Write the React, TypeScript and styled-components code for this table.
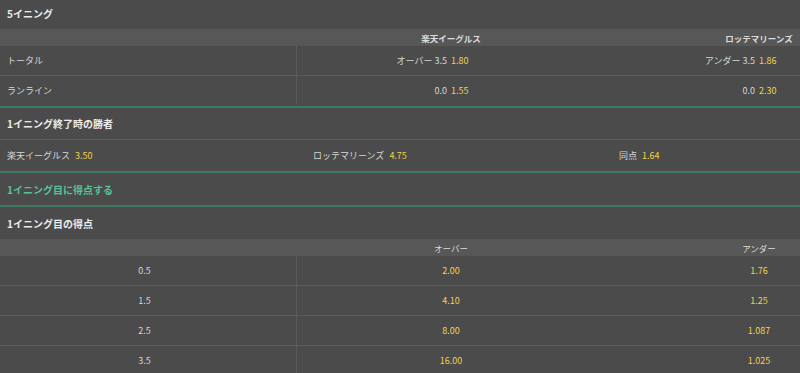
import styled, { createGlobalStyle } from 'styled-components';

const GlobalStyle = createGlobalStyle`
  html, body {
    margin: 0;
    padding: 0;
    background: #4b4b4b;
    overflow: hidden;
  }
  body {
    font-family: "Noto Sans CJK JP", "Noto Sans", sans-serif;
    -webkit-font-smoothing: antialiased;
  }
`;

interface ISide {
  label: string;
  odds: string;
}
interface ILineRow {
  name: string;
  home: ISide;
  away: ISide;
}
interface IScoreRow {
  line: string;
  over: string;
  under: string;
}

const HOME = '楽天イーグルス';
const AWAY = 'ロッテマリーンズ';

const LINE_ROWS: ILineRow[] = [
  { name: 'トータル', home: { label: 'オーバー 3.5', odds: '1.80' }, away: { label: 'アンダー 3.5', odds: '1.86' } },
  { name: 'ランライン', home: { label: '0.0', odds: '1.55' }, away: { label: '0.0', odds: '2.30' } },
];

const WINNER: ISide[] = [
  { label: HOME, odds: '3.50' },
  { label: AWAY, odds: '4.75' },
  { label: '同点', odds: '1.64' },
];

const SCORE_ROWS: IScoreRow[] = [
  { line: '0.5', over: '2.00', under: '1.76' },
  { line: '1.5', over: '4.10', under: '1.25' },
  { line: '2.5', over: '8.00', under: '1.087' },
  { line: '3.5', over: '16.00', under: '1.025' },
];

const Viewport = styled.div`
  width: 800px;
  height: 373px;
  overflow: hidden;
`;

const Board = styled.div`
  width: 1224px;
  margin-top: -3px;
`;

const Section = styled.section`
  border-bottom: 2px solid #3d7a61;
`;

const Title = styled.h2<{ $accent?: boolean; $ruled?: boolean }>`
  margin: 0;
  height: 32px;
  box-sizing: border-box;
  padding-left: 7px;
  display: flex;
  align-items: center;
  font-size: 10px;
  font-weight: 700;
  color: ${(p) => (p.$accent ? '#55c393' : '#ececec')};
  border-bottom: ${(p) => (p.$ruled ? '1px solid #5d5d5d' : 'none')};
`;

const Grid = styled.div`
  display: grid;
  grid-template-columns: 297px 308px 308px 1fr;
`;

const HeadRow = styled(Grid)`
  height: 17px;
  background: #575757;
  align-items: center;
`;

const HeadCell = styled.div`
  text-align: center;
  font-size: 8.5px;
  font-weight: 700;
  color: #dcdcdc;
`;

const PlainHead = styled(HeadCell)`
  font-weight: 400;
`;

const Row = styled(Grid)`
  height: 30px;
  box-sizing: border-box;
  border-bottom: 1px solid #5c5c5c;

  &:last-child {
    border-bottom: 1px solid #4b4b4b;
  }
`;

const NameCell = styled.div<{ $center?: boolean }>`
  display: flex;
  align-items: center;
  justify-content: ${(p) => (p.$center ? 'center' : 'flex-start')};
  padding: ${(p) => (p.$center ? '0 7px 0 0' : '0 0 0 7px')};
  border-right: 1px solid #5a5a5a;
  font-size: 9px;
  color: #d6d6d6;
`;

const PriceCell = styled.div`
  display: grid;
  grid-template-columns: 1fr 1fr;
  align-items: center;
  font-size: 9px;
`;

const SideLabel = styled.span`
  text-align: right;
  padding-right: 4px;
  color: #d6d6d6;
`;

const Odds = styled.span`
  color: #f3d34a;
`;

const CenterOdds = styled(Odds)`
  display: flex;
  align-items: center;
  justify-content: center;
  font-size: 9px;
`;

const WinnerRow = styled.div`
  display: flex;
  height: 31px;
  align-items: center;
  font-size: 9px;
`;

const WinnerCell = styled.div`
  width: 306px;
  padding-left: 7px;
  box-sizing: border-box;
  display: flex;
  gap: 5px;
  color: #d6d6d6;
`;

const App = () => {
  return (
    <Viewport>
      <GlobalStyle />
      <Board>
        <Section>
          <Title>5イニング</Title>
          <HeadRow>
            <span />
            <HeadCell>{HOME}</HeadCell>
            <HeadCell>{AWAY}</HeadCell>
          </HeadRow>
          {LINE_ROWS.map((row) => (
            <Row key={row.name}>
              <NameCell>{row.name}</NameCell>
              {[row.home, row.away].map((side, i) => (
                <PriceCell key={i}>
                  <SideLabel>{side.label}</SideLabel>
                  <Odds>{side.odds}</Odds>
                </PriceCell>
              ))}
            </Row>
          ))}
        </Section>

        <Section>
          <Title $ruled>1イニング終了時の勝者</Title>
          <WinnerRow>
            {WINNER.map((w) => (
              <WinnerCell key={w.label}>
                {w.label}
                <Odds>{w.odds}</Odds>
              </WinnerCell>
            ))}
          </WinnerRow>
        </Section>

        <Section>
          <Title $accent>1イニング目に得点する</Title>
        </Section>

        <section>
          <Title>1イニング目の得点</Title>
          <HeadRow>
            <span />
            <PlainHead>オーバー</PlainHead>
            <PlainHead>アンダー</PlainHead>
          </HeadRow>
          {SCORE_ROWS.map((row) => (
            <Row key={row.line}>
              <NameCell $center>{row.line}</NameCell>
              <CenterOdds>{row.over}</CenterOdds>
              <CenterOdds>{row.under}</CenterOdds>
            </Row>
          ))}
        </section>
      </Board>
    </Viewport>
  );
};

export default App;
